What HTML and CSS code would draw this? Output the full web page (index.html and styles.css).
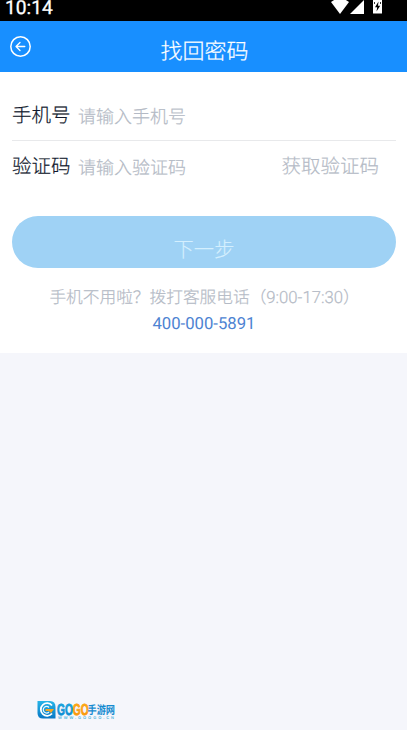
FILE: index.html
```html
<!DOCTYPE html>
<html lang="zh-CN">
<head>
<meta charset="utf-8">
<title>找回密码</title>
<link rel="stylesheet" href="styles.css">
</head>
<body>
<div class="status">
  <span class="clock">10:14</span>
  <svg class="status-icons" width="54" height="21" viewBox="0 0 54 21" fill="#fff">
    <path d="M0 2Q9-5 18 2L9 14Z"/>
    <path d="M33 0V14H19Z"/>
    <path d="M42 0H51V13.500H42Z"/>
    <path d="M47.500 1.500L44 7.200H46.200L45.500 11.500L49.200 5.800H47Z" fill="#000"/>
    <path d="M43.500 2V4M49.500 2V4" stroke="#000" stroke-width=".8"/>
  </svg>
</div>
<header class="header">
  <button class="back" aria-label="返回">
    <svg width="21" height="21" viewBox="0 0 21 21" fill="none" stroke="#fff" stroke-linecap="round" stroke-linejoin="round">
      <circle cx="10.500" cy="10.500" r="9.700" stroke-width="1.500"/>
      <path d="M14.800 10.500H6.200M10 6.500L6 10.500L10 14.500" stroke-width="1.300"/>
    </svg>
  </button>
  <h1 class="title">找回密码</h1>
</header>
<main class="panel">
  <div class="row">
    <label class="label">手机号</label>
    <span class="hint">请输入手机号</span>
  </div>
  <div class="row">
    <label class="label">验证码</label>
    <span class="hint">请输入验证码</span>
    <span class="code">获取验证码</span>
  </div>
  <button class="next">下一步</button>
  <p class="help">手机不用啦？拨打客服电话（9:00-17:30）</p>
  <p class="phone">400-000-5891</p>
</main>
<footer class="footer">
  <svg width="84" height="22" viewBox="0 0 84 22">
    <defs>
      <linearGradient id="blue" x1="0" y1="0" x2="0" y2="1"><stop offset="0" stop-color="#27b5e8"/><stop offset="1" stop-color="#0877c4"/></linearGradient>
      <linearGradient id="gold" x1="0" y1="0" x2="0" y2="1"><stop offset="0" stop-color="#ffb51c"/><stop offset="1" stop-color="#f78a08"/></linearGradient>
    </defs>
    <path d="M0.500 2H13Q18.500 2 18.500 8V19.500H6Q0.500 19.500 0.500 14Z" fill="url(#blue)"/>
    <path d="M15 6.500A6.300 6.300 0 1 0 15 14.500" fill="none" stroke="#fff" stroke-width="1.800"/>
    <path d="M12 8.500A3.300 3.300 0 1 0 12 13" fill="none" stroke="#e8f8ff" stroke-width="1.200"/>
    <path d="M8.500 10H17L14 14L12 12H8.500Z" fill="#f7a51e"/>
    <g transform="translate(20 15.500) scale(.64 1)">
      <text class="brand" x="0" y="0" fill="url(#blue)" stroke="#1398d8">GO</text>
      <text class="brand" x="24.500" y="0" fill="url(#gold)" stroke="#fca012">GO</text>
    </g>
    <text class="brand-cn" x="50.500" y="14.500" textLength="27.500" lengthAdjust="spacingAndGlyphs">手游网</text>
    <text class="site" x="21" y="20" textLength="56">WWW.GOOGO.CN</text>
  </svg>
</footer>
</body>
</html>
```

FILE: styles.css
```css
* { box-sizing: border-box; }
body {
  margin: 0;
  height: 730px;
  display: flex;
  flex-direction: column;
  overflow: hidden;
  background: #f5f6fb;
  font-family: Roboto, "Noto Sans CJK SC", sans-serif;
  text-rendering: geometricPrecision;
}
button { border: 0; padding: 0; font-family: inherit; }
.status {
  height: 21px;
  padding: 0 22px 0 5px;
  display: flex;
  justify-content: space-between;
  background: #000;
  color: #fff;
}
.clock { font-size: 19.200px; line-height: 16px; -webkit-text-stroke: .3px; }
.header {
  height: 51px;
  padding: 0 10px;
  display: grid;
  grid-template-columns: 21px 1fr 21px;
  background: #188fff;
}
.back { height: 21px; margin-top: 15px; background: none; line-height: 0; }
.title {
  margin: 5px 0 0 2px;
  color: #fff;
  font-size: 22px;
  line-height: 53px;
  font-weight: 300;
  -webkit-text-stroke: .2px;
  text-align: center;
}
.panel { height: 281px; padding: 18px 11px 0 12px; background: #fff; }
.row { display: flex; height: 51px; font-weight: 300; -webkit-text-stroke: .2px; }
.row:first-child { border-bottom: 1px solid #e8e9eb; }
.label { width: 66px; font-size: 19.500px; line-height: 52px; color: #10182c; }
.hint { font-size: 18px; line-height: 55px; color: #b4bac5; }
.code { margin: 0 17px 0 auto; font-size: 19.500px; line-height: 52px; color: #b4bac5; }
.next {
  display: block;
  width: 100%;
  height: 52px;
  margin-top: 24px;
  padding-top: 11px;
  border-radius: 26px;
  background: #9fd2f5;
  color: #d4effe;
  font-size: 20.300px;
  font-weight: 300;
  -webkit-text-stroke: .2px;
}
.help, .phone { margin: 0; text-align: center; font-size: 16.700px; line-height: 26px; }
.help { margin-top: 18px; padding-left: 1px; color: #b4bac5; font-weight: 300; -webkit-text-stroke: .2px; }
.phone { color: #4d83d2; }
.footer { margin-top: auto; height: 31px; padding-left: 37px; line-height: 0; }
.brand { font: bold 16px "Liberation Sans", sans-serif; stroke-width: .8px; }
.brand-cn { font: bold 11.500px "Noto Sans CJK SC", sans-serif; fill: #168bd0; }
.site { font: bold 4px "Liberation Sans", sans-serif; fill: #55b8df; }
```
